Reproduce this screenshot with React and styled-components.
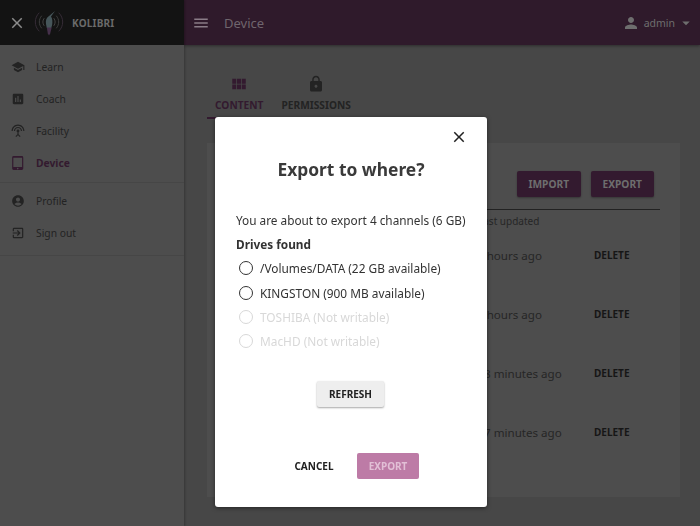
import styled, { createGlobalStyle } from "styled-components";
import {
  MdSchool, MdAssessment, MdSettingsInputAntenna, MdTabletMac, MdAccountCircle,
  MdExitToApp, MdViewModule, MdLock, MdPerson, MdArrowDropDown, MdMenu, MdClose,
} from "react-icons/md";

const FONT = `"Noto Sans", "Open Sans", sans-serif`;

// the page sits dimmed behind the dialog, so its palette is the dimmed one
const DIM_TEXT = "#232323";
const DIM_PLUM = "#331a2f";
const DIM_LIGHT = "#6e6e6e";

const NAV_TOP = [
  { id: "learn", label: "Learn", Icon: MdSchool },
  { id: "coach", label: "Coach", Icon: MdAssessment },
  { id: "facility", label: "Facility", Icon: MdSettingsInputAntenna },
  { id: "device", label: "Device", Icon: MdTabletMac, active: true },
];

const NAV_BOTTOM = [
  { id: "profile", label: "Profile", Icon: MdAccountCircle },
  { id: "signout", label: "Sign out", Icon: MdExitToApp },
];

const ROWS = [
  { id: 1, time: "2 hours ago", shift: -7 },
  { id: 2, time: "2 hours ago", shift: -7 },
  { id: 3, time: "8 minutes ago", shift: 0 },
  { id: 4, time: "7 minutes ago", shift: 0 },
];

const DRIVES = [
  { id: "data", label: "/Volumes/DATA (22 GB available)" },
  { id: "kingston", label: "KINGSTON (900 MB available)" },
  { id: "toshiba", label: "TOSHIBA (Not writable)", disabled: true },
  { id: "machd", label: "MacHD (Not writable)", disabled: true },
];

const Logo = () => (
  <svg width="30" height="28" viewBox="0 0 30 28" fill="none">
    <g strokeWidth="1" strokeLinecap="round">
      <path d="M5 4C0 9 0 17 5 22" stroke="#352b36" />
      <path d="M7.500 7c-3 3.600-3 8.400 0 12" stroke="#3c3c3c" />
      <path d="M10 9.500c-1.600 2.200-1.600 4.800 0 7" stroke="#424242" />
      <path d="M25 4c5 5 5 13 0 18" stroke="#352b36" />
      <path d="M22.500 7c3 3.600 3 8.400 0 12" stroke="#3c3c3c" />
      <path d="M20 9.500c1.600 2.200 1.600 4.800 0 7" stroke="#424242" />
    </g>
    <path d="M21 2l-4 5.500c1.500 2 1.800 5.500 1 9l-.8 2.500h-4.400l-.8-4c-.5-3.500.3-6.500 3-8z" fill="#46565a" />
    <path d="M12.800 18.500l1 6 1.200 2 1.200-2 1.500-6z" fill="#45304a" />
  </svg>
);

const App = () => (
  <Page>
    <GlobalStyle />
    <Sidebar>
      <SideHeader>
        <MdClose size={18} color="#8c8c8c" />
        <LogoWrap><Logo /></LogoWrap>
        <Brand>KOLIBRI</Brand>
      </SideHeader>
      <NavGroup>
        {NAV_TOP.map(({ id, label, Icon, active }) => (
          <NavItem key={id} $active={active}>
            <Icon size={14} />
            {label}
          </NavItem>
        ))}
      </NavGroup>
      <NavGroup>
        {NAV_BOTTOM.map(({ id, label, Icon }) => (
          <NavItem key={id}>
            <Icon size={14} />
            {label}
          </NavItem>
        ))}
      </NavGroup>
    </Sidebar>

    <Main>
      <AppBar>
        <MdMenu size={18} color="#8a7c87" />
        <AppTitle>Device</AppTitle>
        <UserMenu>
          <MdPerson size={18} />
          <span>admin</span>
          <MdArrowDropDown size={18} />
        </UserMenu>
      </AppBar>
      <Content>
        <Tabs>
          <Tab $active>
            <MdViewModule size={18} />
            CONTENT
          </Tab>
          <Tab>
            <MdLock size={18} />
            PERMISSIONS
          </Tab>
        </Tabs>
        <Card>
          <CardActions>
            <PrimaryButton>IMPORT</PrimaryButton>
            <PrimaryButton>EXPORT</PrimaryButton>
          </CardActions>
          <HeadRow>Last updated</HeadRow>
          {ROWS.map(({ id, time, shift }) => (
            <ChannelRow key={id}>
              <Time $shift={shift}>{time}</Time>
              <DeleteLink>DELETE</DeleteLink>
            </ChannelRow>
          ))}
        </Card>
      </Content>
    </Main>

    <Overlay>
      <Modal>
        <CloseRow>
          <MdClose size={18} color="#212121" />
        </CloseRow>
        <Title>Export to where?</Title>
        <Summary>You are about to export 4 channels (6 GB)</Summary>
        <DrivesLabel>Drives found</DrivesLabel>
        <DriveList>
          {DRIVES.map(({ id, label, disabled }) => (
            <Drive key={id} $disabled={disabled}>
              <RadioMark $disabled={disabled} />
              {label}
            </Drive>
          ))}
        </DriveList>
        <RefreshRow>
          <RefreshButton>REFRESH</RefreshButton>
        </RefreshRow>
        <ModalActions>
          <CancelButton>CANCEL</CancelButton>
          <ExportButton>EXPORT</ExportButton>
        </ModalActions>
      </Modal>
    </Overlay>
  </Page>
);

const GlobalStyle = createGlobalStyle`
  html, body {
    margin: 0;
    height: 100%;
    overflow: hidden;
  }
  body {
    font-family: ${FONT};
    color: #212121;
  }
`;

const Page = styled.div`
  display: flex;
  width: 700px;
  height: 526px;
  background: #474747;
  overflow: hidden;
`;

const Sidebar = styled.aside`
  flex: 0 0 184px;
  background: #4d4d4d;
  box-shadow: 1px 0 2px rgba(0, 0, 0, 0.25);
  z-index: 2;
`;

const SideHeader = styled.div`
  display: flex;
  align-items: center;
  height: 45px;
  padding-left: 8px;
  background: #131313;
  box-sizing: border-box;
`;

const LogoWrap = styled.div`
  display: flex;
  margin: 0 0 0 8px;
`;

const Brand = styled.span`
  margin-left: 8px;
  color: #6a6a6a;
  font-size: 10px;
  font-weight: 700;
  letter-spacing: 0.2px;
`;

const NavGroup = styled.nav`
  display: flex;
  flex-direction: column;
  padding: 2px 0 6px;
  border-bottom: 1px solid #464646;

  &:first-of-type {
    padding: 6px 0 3px;
  }
`;

const NavItem = styled.div`
  display: flex;
  align-items: center;
  gap: 11px;
  height: 32px;
  padding-left: 11px;
  font-size: 10.3px;
  font-weight: ${(p) => (p.$active ? 700 : 400)};
  color: ${(p) => (p.$active ? DIM_PLUM : DIM_TEXT)};
`;

const Main = styled.main`
  flex: 1;
  min-width: 0;
`;

const AppBar = styled.header`
  display: flex;
  align-items: center;
  height: 45px;
  padding: 0 5px 0 8px;
  background: #2f1a2b;
  box-sizing: border-box;
  box-shadow: 0 1px 3px rgba(0, 0, 0, 0.4);
`;

const AppTitle = styled.h1`
  margin: 0 0 0 14px;
  color: #6f656d;
  font-size: 13px;
  font-weight: 400;
`;

const UserMenu = styled.div`
  display: flex;
  align-items: center;
  gap: 4px;
  margin-left: auto;
  color: ${DIM_LIGHT};
  font-size: 10.500px;

  svg:last-child {
    margin-left: -2px;
  }
`;

const Content = styled.div`
  padding: 30px 20px 0 23px;
`;

const Tabs = styled.div`
  display: flex;
  height: 68px;
`;

const Tab = styled.div`
  display: flex;
  flex-direction: column;
  align-items: center;
  gap: 5px;
  height: 44px;
  padding: 0 9px 0 8px;
  margin-right: ${(p) => (p.$active ? "1px" : "0")};
  box-sizing: border-box;
  font-size: 10.2px;
  font-weight: 700;
  color: ${(p) => (p.$active ? DIM_PLUM : DIM_TEXT)};
  border-bottom: 2px solid ${(p) => (p.$active ? DIM_PLUM : "transparent")};
`;

const Card = styled.section`
  height: 354px;
  padding: 28px 20px 0 20px;
  background: #4d4d4d;
  box-sizing: border-box;
`;

const CardActions = styled.div`
  display: flex;
  justify-content: flex-end;
  gap: 9.500px;
  height: 38px;
  padding-right: 6px;
  border-bottom: 1px solid #222;
`;

const PrimaryButton = styled.button`
  height: 26px;
  padding: 0 12px;
  border: 0;
  border-radius: 2px;
  background: ${DIM_PLUM};
  color: ${DIM_LIGHT};
  font-family: ${FONT};
  font-size: 10.2px;
  font-weight: 700;
  box-shadow: 0 1px 2px rgba(0, 0, 0, 0.3);
`;

const HeadRow = styled.div`
  padding: 4px 0 0 251px;
  font-size: 10px;
  line-height: 14px;
  color: #262626;
`;

const ChannelRow = styled.div`
  display: grid;
  grid-template-columns: 110px auto;
  height: 59px;
  align-items: center;
  padding-left: 257px;
  margin-top: -2px;
  font-size: 11.600px;
  color: #262626;

  & + & {
    margin-top: 0;
  }
`;

const Time = styled.span`
  margin-left: ${(p) => p.$shift}px;
  white-space: nowrap;
`;

const DeleteLink = styled.span`
  margin-bottom: 2px;
  font-size: 10px;
  font-weight: 700;
  color: #161616;
`;

const Overlay = styled.div`
  position: fixed;
  inset: 0;
  z-index: 10;
  display: flex;
  align-items: flex-start;
  justify-content: center;
  padding: 117px 0 0 2px;
`;

const Modal = styled.div`
  display: flex;
  flex-direction: column;
  width: 272px;
  height: 390px;
  padding: 0 21px;
  background: #fff;
  border-radius: 3px;
  box-sizing: border-box;
  box-shadow: 0 1px 4px rgba(0, 0, 0, 0.5);
`;

const CloseRow = styled.div`
  display: flex;
  justify-content: flex-end;
  height: 18px;
  padding-top: 11px;
  margin-right: -2px;
`;

const Title = styled.h2`
  margin: 9px 0 0;
  font-size: 17.400px;
  line-height: 28px;
  font-weight: 700;
  text-align: center;
  color: #3a3a3a;
`;

const Summary = styled.p`
  margin: 28px 0 0;
  font-size: 11.800px;
  line-height: 18px;
  white-space: nowrap;
  color: #333;
`;

const DrivesLabel = styled.div`
  margin-top: 6px;
  font-size: 11.800px;
  line-height: 18px;
  font-weight: 700;
  color: #333;
`;

const DriveList = styled.div`
  display: flex;
  flex-direction: column;
  margin-top: 3px;
`;

const Drive = styled.label`
  display: flex;
  align-items: center;
  gap: 7px;
  height: 24.400px;
  padding-left: 3px;
  font-size: 11.870px;
  color: ${(p) => (p.$disabled ? "#d8d8d8" : "#333")};
`;

const RadioMark = styled.span`
  width: 14px;
  height: 14px;
  border: 1.500px solid ${(p) => (p.$disabled ? "#d8d8d8" : "#333")};
  border-radius: 50%;
  box-sizing: border-box;
`;

const RefreshRow = styled.div`
  display: flex;
  justify-content: center;
  margin: 27px 1px 0 0;
`;

const RefreshButton = styled.button`
  width: 67px;
  height: 26px;
  padding: 0;
  border: 0;
  border-radius: 2px;
  background: #eee;
  color: #212121;
  font-family: ${FONT};
  font-size: 10px;
  font-weight: 700;
  box-shadow: 0 1px 2px rgba(0, 0, 0, 0.35);
`;

const ModalActions = styled.div`
  display: flex;
  align-items: center;
  justify-content: flex-end;
  margin-top: 46px;
  padding-right: 47px;
`;

const CancelButton = styled.button`
  width: 62px;
  margin-right: 12px;
  padding: 0;
  border: 0;
  background: none;
  color: #212121;
  font-family: ${FONT};
  font-size: 10px;
  font-weight: 700;
`;

const ExportButton = styled.button`
  width: 62px;
  height: 26px;
  padding: 0;
  border: 0;
  border-radius: 2px;
  background: #bd7ba6;
  color: #e2bfd6;
  font-family: ${FONT};
  font-size: 10px;
  font-weight: 700;
`;

export default App;
